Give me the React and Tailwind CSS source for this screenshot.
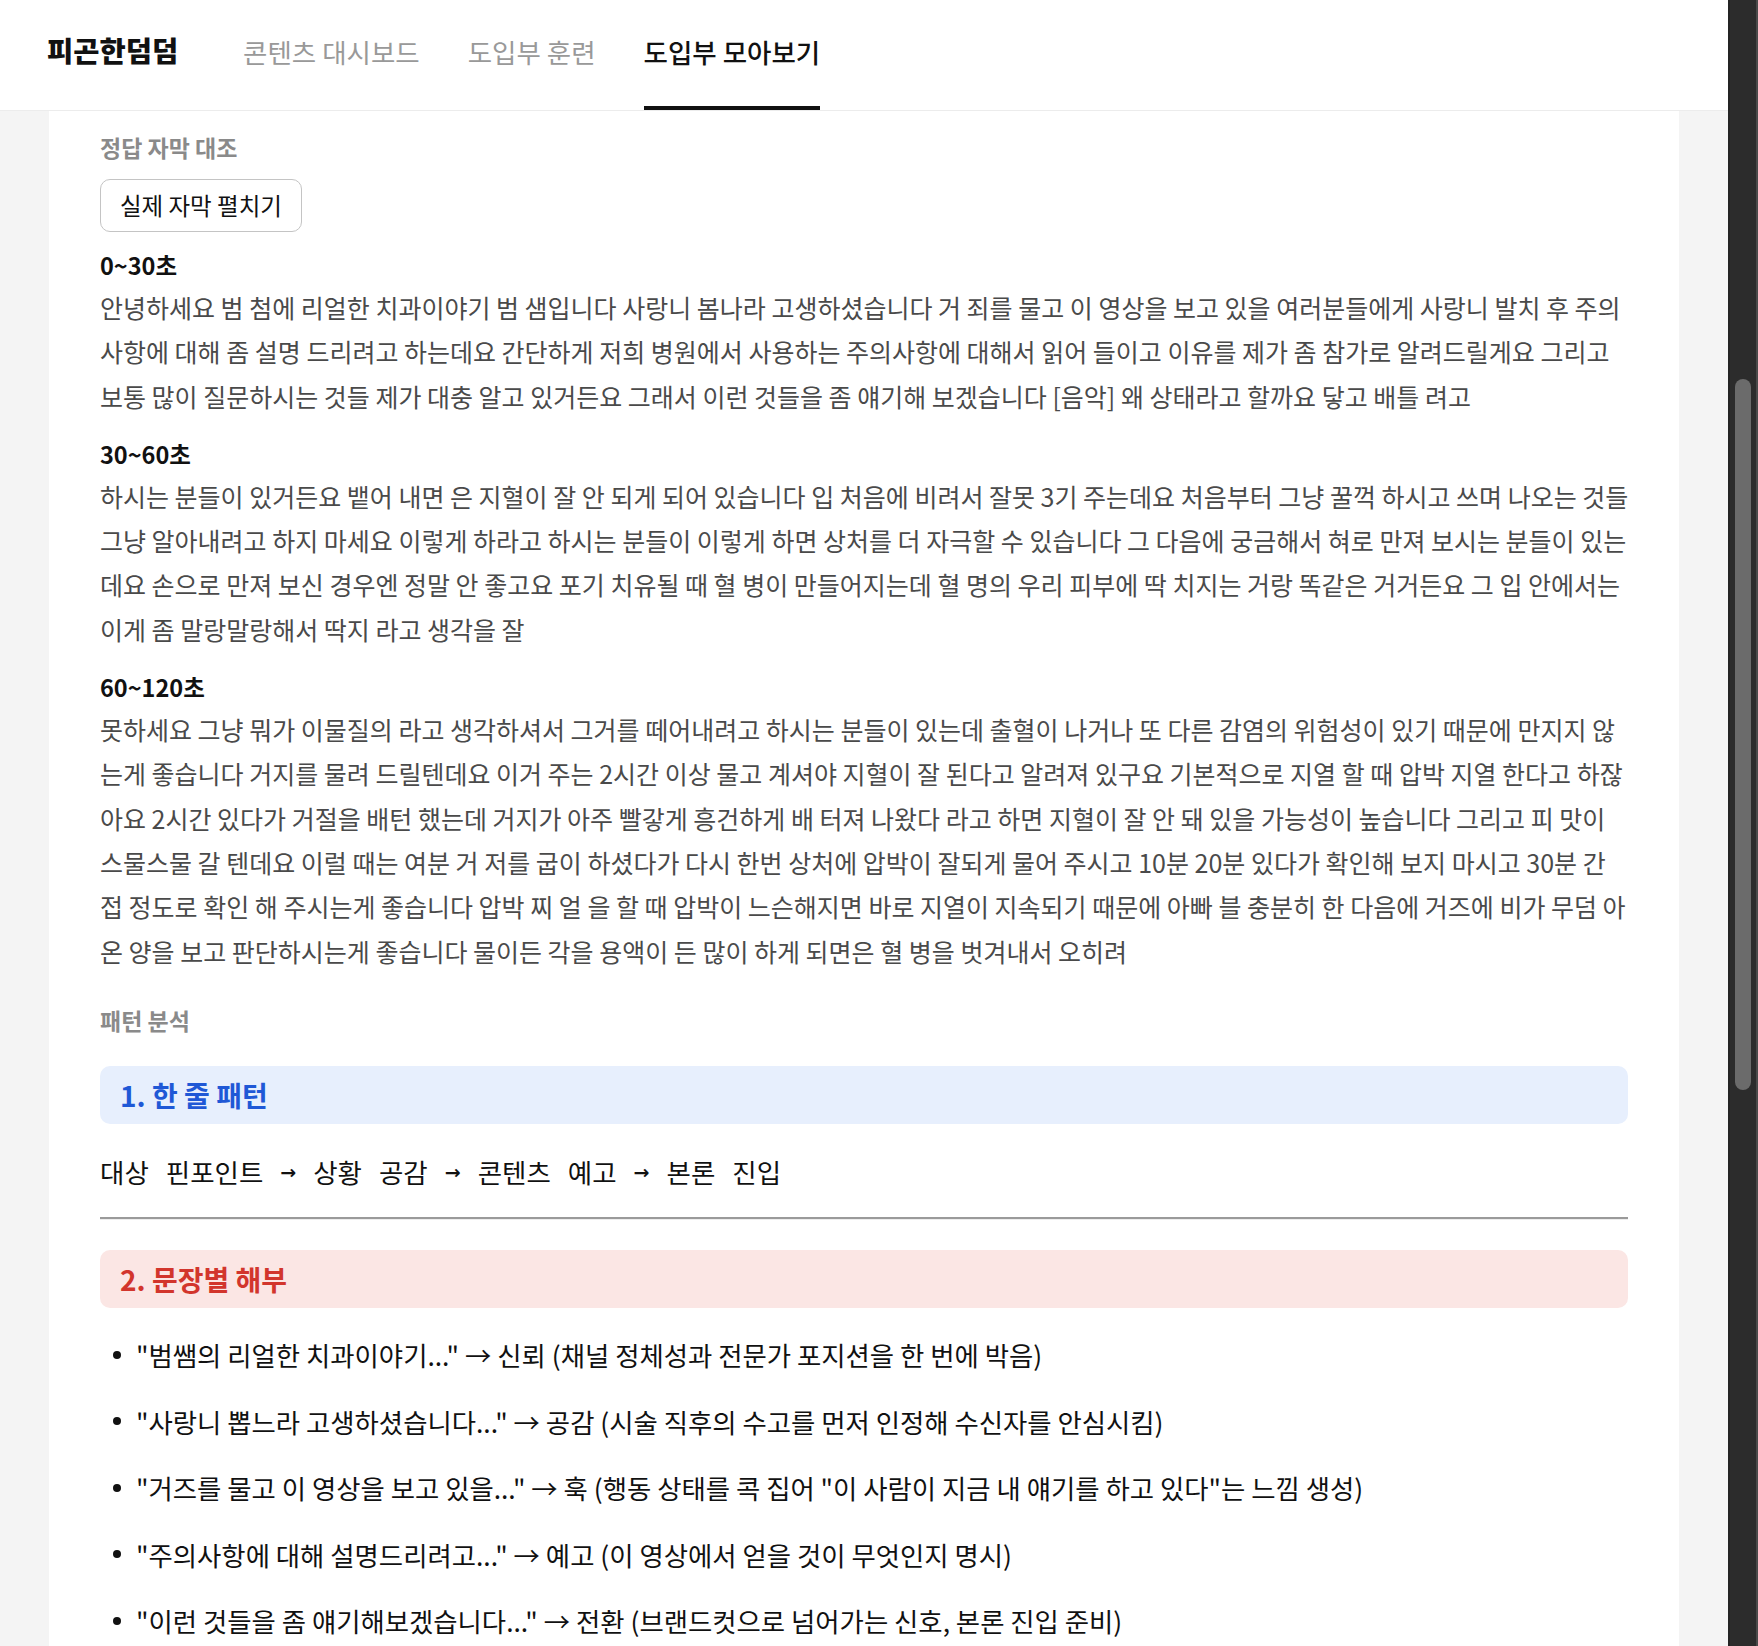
const FONT = { fontFamily: '"Noto Sans CJK KR", "Noto Sans", sans-serif' };

const tabs = [
  { label: '콘텐츠 대시보드', active: false },
  { label: '도입부 훈련', active: false },
  { label: '도입부 모아보기', active: true },
];

// lines kept as they wrap in the captured layout
const transcript = [
  {
    range: '0~30초',
    lines: [
      '안녕하세요 범 첨에 리얼한 치과이야기 범 샘입니다 사랑니 봄나라 고생하셨습니다 거 죄를 물고 이 영상을 보고 있을 여러분들에게 사랑니 발치 후 주의',
      '사항에 대해 좀 설명 드리려고 하는데요 간단하게 저희 병원에서 사용하는 주의사항에 대해서 읽어 들이고 이유를 제가 좀 참가로 알려드릴게요 그리고',
      '보통 많이 질문하시는 것들 제가 대충 알고 있거든요 그래서 이런 것들을 좀 얘기해 보겠습니다 [음악] 왜 상태라고 할까요 닿고 배틀 려고',
    ],
  },
  {
    range: '30~60초',
    lines: [
      '하시는 분들이 있거든요 뱉어 내면 은 지혈이 잘 안 되게 되어 있습니다 입 처음에 비려서 잘못 3기 주는데요 처음부터 그냥 꿀꺽 하시고 쓰며 나오는 것들',
      '그냥 알아내려고 하지 마세요 이렇게 하라고 하시는 분들이 이렇게 하면 상처를 더 자극할 수 있습니다 그 다음에 궁금해서 혀로 만져 보시는 분들이 있는',
      '데요 손으로 만져 보신 경우엔 정말 안 좋고요 포기 치유될 때 혈 병이 만들어지는데 혈 명의 우리 피부에 딱 치지는 거랑 똑같은 거거든요 그 입 안에서는',
      '이게 좀 말랑말랑해서 딱지 라고 생각을 잘',
    ],
  },
  {
    range: '60~120초',
    lines: [
      '못하세요 그냥 뭐가 이물질의 라고 생각하셔서 그거를 떼어내려고 하시는 분들이 있는데 출혈이 나거나 또 다른 감염의 위험성이 있기 때문에 만지지 않',
      '는게 좋습니다 거지를 물려 드릴텐데요 이거 주는 2시간 이상 물고 계셔야 지혈이 잘 된다고 알려져 있구요 기본적으로 지열 할 때 압박 지열 한다고 하잖',
      '아요 2시간 있다가 거절을 배턴 했는데 거지가 아주 빨갛게 흥건하게 배 터져 나왔다 라고 하면 지혈이 잘 안 돼 있을 가능성이 높습니다 그리고 피 맛이',
      '스물스물 갈 텐데요 이럴 때는 여분 거 저를 굽이 하셨다가 다시 한번 상처에 압박이 잘되게 물어 주시고 10분 20분 있다가 확인해 보지 마시고 30분 간',
      '접 정도로 확인 해 주시는게 좋습니다 압박 찌 얼 을 할 때 압박이 느슨해지면 바로 지열이 지속되기 때문에 아빠 블 충분히 한 다음에 거즈에 비가 무덤 아',
      '온 양을 보고 판단하시는게 좋습니다 물이든 각을 용액이 든 많이 하게 되면은 혈 병을 벗겨내서 오히려',
    ],
  },
];

const pattern = ['대상', '핀포인트', '→', '상황', '공감', '→', '콘텐츠', '예고', '→', '본론', '진입'];

const anatomy = [
  '"범쌤의 리얼한 치과이야기..." → 신뢰 (채널 정체성과 전문가 포지션을 한 번에 박음)',
  '"사랑니 뽑느라 고생하셨습니다..." → 공감 (시술 직후의 수고를 먼저 인정해 수신자를 안심시킴)',
  '"거즈를 물고 이 영상을 보고 있을..." → 훅 (행동 상태를 콕 집어 "이 사람이 지금 내 얘기를 하고 있다"는 느낌 생성)',
  '"주의사항에 대해 설명드리려고..." → 예고 (이 영상에서 얻을 것이 무엇인지 명시)',
  '"이런 것들을 좀 얘기해보겠습니다..." → 전환 (브랜드컷으로 넘어가는 신호, 본론 진입 준비)',
];

function Header() {
  return (
    <header className="h-[111px] flex items-stretch pl-[47px] bg-white border-b border-[#ececec]">
      <div className="flex items-center pb-[10px] text-[28.5px] font-extrabold text-[#111]">
        피곤한덤덤
      </div>
      <nav className="flex items-stretch gap-[48px] ml-[65px]">
        {tabs.map((tab) => (
          <div
            key={tab.label}
            className={`flex items-center pb-[3px] text-[26.5px] border-b-[4px] ${
              tab.active
                ? 'border-[#111] text-[#111] font-medium'
                : 'border-transparent text-[#999]'
            }`}
          >
            {tab.label}
          </div>
        ))}
      </nav>
    </header>
  );
}

function SectionLabel({ children }) {
  return <div className="text-[23px] leading-[34px] font-semibold text-[#8a8a8a]">{children}</div>;
}

function Transcript() {
  return (
    <div>
      <SectionLabel>정답 자막 대조</SectionLabel>
      <button className="mt-[15px] h-[53px] px-[19px] flex items-center rounded-[10px] border-[1.5px] border-[#c4c4c4] bg-white text-[23.5px] text-[#111]">
        실제 자막 펼치기
      </button>
      <div className="mt-[16px] flex flex-col gap-[19px]">
        {transcript.map((block) => (
          <div key={block.range}>
            <div className="text-[23.5px] leading-[34px] font-bold text-[#111]">{block.range}</div>
            <p className="mt-[3px] text-[25px] leading-[44.3px] text-[#4a4a4a]">
              {block.lines.map((line) => (
                <span key={line} className="block whitespace-nowrap">
                  {line}
                </span>
              ))}
            </p>
          </div>
        ))}
      </div>
    </div>
  );
}

function Analysis() {
  return (
    <div className="mt-[30px]">
      <SectionLabel>패턴 분석</SectionLabel>

      <div className="mt-[29px] h-[58px] flex items-center px-[20px] rounded-[10px] bg-[#e7effd]">
        <h2 className="text-[28px] font-bold text-[#1f58d6]">1. 한 줄 패턴</h2>
      </div>

      <div className="mt-[28px] h-[40px] flex items-center gap-[17px] text-[26.5px] text-[#111]">
        {pattern.map((word, i) =>
          word === '→' ? (
            <span key={i} className="text-[19px] font-bold" style={{ fontFamily: '"DejaVu Sans", sans-serif' }}>
              →
            </span>
          ) : (
            <span key={i}>{word}</span>
          )
        )}
      </div>

      <div className="mt-[25px] h-[3px] border-t-2 border-[#9a9a9a] border-b border-b-[#ededed]" />

      <div className="mt-[30px] h-[58px] flex items-center px-[20px] rounded-[10px] bg-[#fbe6e4]">
        <h2 className="text-[28px] font-bold text-[#d2352c]">2. 문장별 해부</h2>
      </div>

      <ul className="mt-[27px] flex flex-col gap-[26.5px]">
        {anatomy.map((line) => (
          <li key={line} className="flex items-center h-[40px] text-[26.4px] text-[#111] whitespace-nowrap">
            <span className="w-[8px] h-[8px] rounded-full bg-[#111] ml-[13px] mr-[15px] flex-shrink-0" />
            {line}
          </li>
        ))}
      </ul>
    </div>
  );
}

function Scrollbar() {
  return (
    <div className="w-[30px] flex-shrink-0 bg-[#2c2c2c] border-l-[2px] border-[#242424] border-r-[2px] border-r-[#4a4a4a] pt-[379px] flex justify-center">
      <div className="w-[16px] h-[711px] rounded-full bg-[#6b6b6b]" />
    </div>
  );
}

export default function App() {
  return (
    <div className="h-screen flex overflow-hidden bg-[#f4f4f4]" style={FONT}>
      <div className="flex-1 flex flex-col min-w-0">
        <Header />
        <main className="flex-1">
          <div className="mx-auto w-[1630px] h-full bg-white pl-[51px] pr-[51px] pt-[19px]">
            <Transcript />
            <Analysis />
          </div>
        </main>
      </div>
      <Scrollbar />
    </div>
  );
}
